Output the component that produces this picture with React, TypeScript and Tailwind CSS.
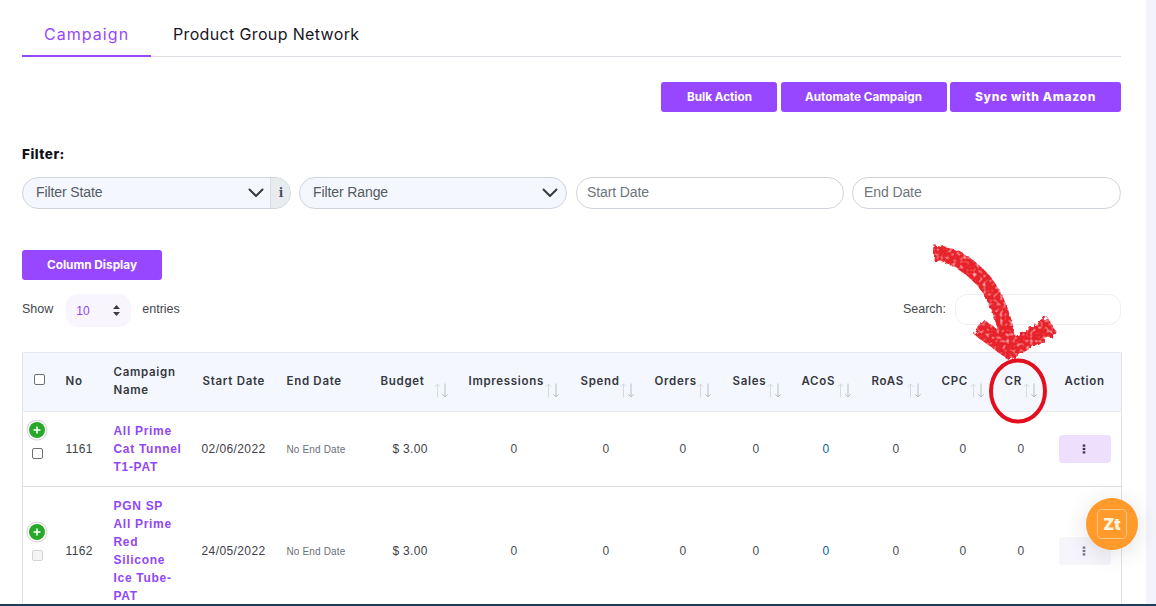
import React from "react";

const sans = "font-['Liberation_Sans',Arial,sans-serif]";
const inter = "font-['Inter',sans-serif]";

function Chevron() {
  return (
    <svg width="16" height="10" viewBox="0 0 16 10" fill="none" stroke="#343a40" strokeWidth="2" strokeLinecap="round" strokeLinejoin="round">
      <path d="M1.5 1.5 8 8l6.5-6.5" />
    </svg>
  );
}

function SortArrows({ right }: { right: string }) {
  return (
    <svg className={`absolute top-[30px] ${right}`} width="14" height="15" viewBox="0 0 14 15" fill="none" strokeWidth="1">
      <path d="M3.5 14.5V1M.8 3.7 3.5 1l2.7 2.7" stroke="#d5dae3" />
      <path d="M11 .5V14M8.3 11.3 11 14l2.7-2.7" stroke="#b8bec8" />
    </svg>
  );
}

function PlusIcon() {
  return (
    <span className="flex size-[16px] items-center justify-center rounded-full bg-[#28a828] shadow-[0_0_0_1.5px_#fff,0_0_0_2.5px_#d5d5d5]">
      <svg width="8" height="8" viewBox="0 0 8 8" stroke="#fff" strokeWidth="1.6"><path d="M4 .5v7M.5 4h7" /></svg>
    </span>
  );
}

function Box({ disabled }: { disabled?: boolean }) {
  return (
    <span className={`block size-[11px] rounded-[2px] border ${disabled ? "border-[#d4d4d4] bg-[#f4f4f4]" : "border-[#6f6f6f] bg-white"}`} />
  );
}

function Kebab({ color }: { color: string }) {
  return (
    <svg width="4" height="10" viewBox="0 0 4 10" fill={color}>
      <rect x="0.7" y="0.5" width="2.6" height="2.2" />
      <rect x="0.7" y="3.9" width="2.6" height="2.2" />
      <rect x="0.7" y="7.3" width="2.6" height="2.2" />
    </svg>
  );
}

const headers: { label: React.ReactNode; sort?: string }[] = [
  { label: "No" },
  { label: <>Campaign<br />Name</> },
  { label: "Start Date" },
  { label: "End Date" },
  { label: "Budget", sort: "right-[10px]" },
  { label: "Impressions", sort: "right-[11px]" },
  { label: "Spend", sort: "right-[10px]" },
  { label: "Orders", sort: "right-[11px]" },
  { label: "Sales", sort: "right-[10px]" },
  { label: "ACoS", sort: "right-[10px]" },
  { label: "RoAS", sort: "right-[10px]" },
  { label: "CPC", sort: "right-[10px]" },
  { label: "CR", sort: "right-[17px]" },
  { label: "Action" },
];

const widths = ["w-[33px]", "w-[47px]", "w-[89px]", "w-[84px]", "w-[94px]", "w-[88px]", "w-[112px]", "w-[74px]", "w-[78px]", "w-[69px]", "w-[70px]", "w-[70px]", "w-[63px]", "w-[60px]", "w-[68px]"];

const metricCells = [
  { w: "pl-[53px]", v: "0" },
  { w: "pl-[33px]", v: "0" },
  { w: "pl-[36px]", v: "0" },
  { w: "pl-[31px]", v: "0" },
  { w: "pl-[32px]", v: "0", blue: true },
  { w: "pl-[32px]", v: "0" },
  { w: "pl-[29px]", v: "0" },
  { w: "pl-[24px]", v: "0" },
];

function Row({ no, name, start, faded }: { no: string; name: React.ReactNode; start: string; faded?: boolean }) {
  return (
    <tr className={`border-b border-[#dedfe3] ${sans}`}>
      <td className="align-middle">
        <div className="flex flex-col items-center gap-[10px] pb-[17px] pr-[4px]">
          <PlusIcon />
          <Box disabled={faded} />
        </div>
      </td>
      <td className="pl-[10px] align-middle text-[12px] tracking-[0.35px] text-[#3e4148]">{no}</td>
      <td className="pl-[11px] align-middle py-[10px] text-[12px] leading-[18px] font-bold tracking-[0.7px] text-[#9147f5]">{name}</td>
      <td className="pl-[10px] align-middle text-[12px] tracking-[0.4px] text-[#3e4148]">{start}</td>
      <td className="pl-[11px] align-middle text-[10px] tracking-[0.15px] text-[#6b6f76]">No End Date</td>
      <td className="pl-[23px] align-middle text-[12px] tracking-[0.3px] text-[#3e4148]">$ 3.00</td>
      {metricCells.map((c, i) => (
        <td key={i} className={`${c.w} align-middle text-[12px] ${c.blue ? "text-[#0b5f94]" : "text-[#4a4e55]"}`}>{c.v}</td>
      ))}
      <td className="align-middle">
        <div className={`ml-[5px] flex h-[28px] w-[52px] items-center justify-center rounded-[3px] pr-[2px] ${faded ? "bg-[#f6f5fb]" : "bg-[#eee0fc]"}`}>
          <Kebab color={faded ? "#77757f" : "#3b3350"} />
        </div>
      </td>
    </tr>
  );
}

export default function App() {
  return (
    <div className={`relative flex h-[606px] w-[1156px] flex-col overflow-hidden bg-white ${sans}`}>
      <div className="flex min-h-0 flex-1">
        <main className="w-[1146px] pl-[22px] pr-[25px]">
          <nav className={`flex h-[57px] border-b border-[#dddce2] pt-[22px] text-[16px] leading-[24px] ${inter}`}>
            <div className="-mb-px h-[35px] w-[129px] border-b-2 border-[#9747ff] pl-[22px] tracking-[1.05px] text-[#9747ff]">Campaign</div>
            <div className="pl-[22px] tracking-[0.35px] text-[#17171f]">Product Group Network</div>
          </nav>

          <div className={`mt-[25px] flex justify-end gap-[3.5px] font-bold text-white ${inter}`}>
            <button className="h-[30px] w-[116px] rounded-[3px] bg-[#9747ff] pl-[1px] pt-[1px] text-[11.7px]">Bulk Action</button>
            <button className="h-[30px] w-[166px] rounded-[3px] bg-[#9747ff] pt-[1px] text-[11.7px]">Automate Campaign</button>
            <button className="h-[30px] w-[171px] rounded-[3px] bg-[#9747ff] text-[12px] font-extrabold tracking-[0.65px]">Sync with Amazon</button>
          </div>

          <h2 className={`mt-[32px] text-[13.5px] font-extrabold leading-[20px] tracking-[0.5px] text-[#10101a] ${inter}`}>Filter:</h2>

          <div className="mt-[13px] flex h-[32px] text-[14px] tracking-[-0.1px] text-[#555a62]">
            <div className="flex w-[269px] overflow-hidden rounded-[16px] border border-[#cfd4dc] bg-[#f4f7fe]">
              <div className="flex flex-1 items-center justify-between pb-[1px] pl-[13px] pr-[6px]">
                <span>Filter State</span>
                <Chevron />
              </div>
              <div className="flex w-[20px] items-center justify-center border-l border-[#d8dce2] bg-[#e9ecef] pl-[1px] font-['DejaVu_Serif',serif] text-[12px] font-bold text-[#495057]">i</div>
            </div>
            <div className="ml-[8px] flex w-[268px] items-center justify-between rounded-[16px] border border-[#cfd4dc] bg-[#f4f7fe] pb-[1px] pl-[13px] pr-[8px]">
              <span>Filter Range</span>
              <Chevron />
            </div>
            <div className="ml-[9px] flex w-[268px] items-center rounded-[16px] border border-[#cfd4dc] pb-[1px] pl-[10px] text-[#6f757d]">Start Date</div>
            <div className="ml-[8px] flex w-[269px] items-center rounded-[16px] border border-[#cfd4dc] pb-[1px] pl-[11px] text-[#6f757d]">End Date</div>
          </div>

          <button className={`mt-[41px] block h-[30px] w-[140px] rounded-[3px] bg-[#9747ff] pt-[1px] text-[11.8px] font-bold text-white ${inter}`}>Column Display</button>

          <div className="mt-[14px] flex h-[33px] items-start justify-between text-[12.5px] text-[#44474d]">
            <div className="flex items-center">
              <span className="-mt-[3px]">Show</span>
              <div className="ml-[13px] flex h-[33px] w-[65px] items-center justify-between rounded-[12px] bg-[#f8f5ff] pl-[10px] pr-[11px] text-[12px] text-[#9147f5]">
                <span>10</span>
                <svg width="7" height="11" viewBox="0 0 7 11" fill="#3c3c44"><path d="M3.5 0 7 4H0zM3.5 11 0 7h7z" /></svg>
              </div>
              <span className="-mt-[3px] ml-[11px]">entries</span>
            </div>
            <div className="flex items-center">
              <span className="-mt-[1px]">Search:</span>
              <div className="ml-[9px] h-[31px] w-[166px] rounded-[12px] border border-[#f0f0f3]" />
            </div>
          </div>

          <table className={`mt-[25px] w-[1099px] table-fixed border-x border-[#e2e3e8] ${inter}`}>
            <colgroup>
              {widths.map((w, i) => <col key={i} className={w} />)}
            </colgroup>
            <thead>
              <tr className="h-[59px] border-y border-[#e8e9ee] bg-[#f4f7fe] text-left text-[11.5px] font-semibold leading-[18px] tracking-[0.7px] text-[#36383f]">
                <th className="align-middle">
                  <div className="flex justify-center pb-[6px] pl-[1px]"><Box /></div>
                </th>
                {headers.map((h, i) => (
                  <th key={i} className={`relative pb-[2px] font-semibold ${i === 0 ? "pl-[10px]" : "pl-[11px]"}`}>
                    {h.label}
                    {h.sort && <SortArrows right={h.sort} />}
                  </th>
                ))}
              </tr>
            </thead>
            <tbody>
              <Row no="1161" start="02/06/2022" name={<>All Prime<br />Cat Tunnel<br />T1-PAT</>} />
              <Row no="1162" start="24/05/2022" faded name={<>PGN SP<br />All Prime<br />Red<br />Silicone<br />Ice Tube-<br />PAT</>} />
            </tbody>
          </table>
        </main>
        <div className="w-[10px] bg-[#f3f3fc]" />
      </div>
      <div className="h-[2px] bg-[#1d3b5c]" />

      {/* red annotation drawn over the screenshot */}
      <svg className="pointer-events-none absolute left-0 top-0" width="1156" height="606" fill="none">
        <defs>
          <filter id="rough" x="-10%" y="-10%" width="120%" height="120%">
            <feTurbulence type="fractalNoise" baseFrequency="0.22" numOctaves="2" seed="4" result="n" />
            <feDisplacementMap in="SourceGraphic" in2="n" scale="7" result="d" />
            <feTurbulence type="fractalNoise" baseFrequency="0.3" numOctaves="1" seed="9" />
            <feColorMatrix values="0 0 0 0 0  0 0 0 0 0  0 0 0 0 0  0 0 0 -2 2" result="holes" />
            <feComposite in="d" in2="holes" operator="in" />
          </filter>
        </defs>
        <g filter="url(#rough)" stroke="#e8202c" strokeLinecap="butt" strokeLinejoin="round">
          <path d="M934 253C950 254 964 260 983 280C996 296 1005 318 1010 350" strokeWidth="16" />
          <path d="M979 327L1010 350L1052 325" strokeWidth="18" />
        </g>
        <ellipse cx="1018" cy="391" rx="27" ry="30.5" stroke="#e2101e" strokeWidth="4" />
      </svg>

      {/* floating chat launcher */}
      <div className="absolute left-[1086px] top-[498px] flex size-[52px] items-center justify-center rounded-full bg-[#ff9a2b] shadow-[0_4px_24px_rgba(0,0,0,0.12)]">
        <div className={`flex size-[30px] items-center justify-center rounded-[5px] border border-[#ffc98c] text-[16px] font-black text-[#fff3e0] ${inter}`}>Zt</div>
      </div>
    </div>
  );
}
